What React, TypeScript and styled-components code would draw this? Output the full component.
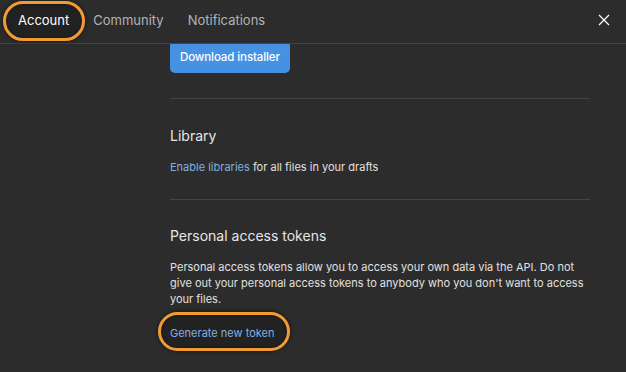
import styled, { createGlobalStyle } from "styled-components";

const GlobalStyle = createGlobalStyle`
  html, body {
    margin: 0;
    padding: 0;
    background: #2c2c2c;
  }
  body {
    font-family: Inter, "Noto Sans", sans-serif;
    -webkit-font-smoothing: antialiased;
  }
`;

const Modal = styled.div`
  width: 626px;
  height: 372px;
  background: #2c2c2c;
  color: #e6e6e6;
  display: flex;
  flex-direction: column;
  overflow: hidden;
`;

const Header = styled.div`
  height: 44px;
  flex: none;
  box-sizing: border-box;
  display: flex;
  align-items: center;
  justify-content: space-between;
  padding: 0 15px 4px 18px;
  border-bottom: 1px solid #444444;
  position: relative;
  z-index: 2;
  background: #2c2c2c;
`;

const Tabs = styled.div`
  display: flex;
  align-items: center;
  gap: 24px;
`;

const Tab = styled.div<{ $active?: boolean }>`
  position: relative;
  font-size: 13px;
  line-height: 16px;
  color: ${(p) => (p.$active ? "#ffffff" : "#b3b3b3")};
`;

const Label = styled.span`
  position: relative;
  z-index: 1;
`;

const Ring = styled.span<{ $inset: string }>`
  position: absolute;
  inset: ${(p) => p.$inset};
  border: 3px solid #f29b32;
  border-radius: 999px;
  background: rgba(0, 0, 0, 0.22);
  box-shadow: 0 0 4px rgba(0, 0, 0, 0.6), inset 0 0 3px rgba(0, 0, 0, 0.5);
  pointer-events: none;
`;

const Close = styled.button`
  border: 0;
  background: none;
  padding: 0;
  width: 14px;
  height: 14px;
  display: flex;
  align-items: center;
  justify-content: center;
  color: #ffffff;
`;

const Body = styled.div`
  flex: 1;
  overflow: hidden;
  padding: 0 36px 0 170px;
`;

const Section = styled.div<{ $first?: boolean }>`
  padding: ${(p) => (p.$first ? "0 0 25px" : "27px 0 24px")};
  margin-top: ${(p) => (p.$first ? "-3px" : "0")};
  border-bottom: 1px solid #444444;

  &:last-child {
    border-bottom: 0;
    padding-top: 26px;
  }
`;

const PrimaryButton = styled.button`
  height: 32px;
  padding: 0 10px;
  border: 0;
  border-radius: 5px;
  background: #4791e3;
  color: #ffffff;
  font-family: inherit;
  font-size: 11.5px;
  font-weight: 500;
  letter-spacing: -0.1px;
`;

const Heading = styled.h2`
  margin: 0 0 13px;
  font-size: 14px;
  line-height: 20px;
  font-weight: 400;
  color: #e6e6e6;
`;

const Text = styled.p`
  margin: 0;
  font-size: 11px;
  line-height: 16px;
  color: #e0e0e0;
`;

const Link = styled.a`
  color: #7eb0e3;
  text-decoration: none;
`;

const ActionLink = styled.a`
  position: relative;
  display: inline-block;
  margin-top: 18px;
  font-size: 11px;
  line-height: 16px;
  color: #7eb0e3;
  text-decoration: none;
`;

export default function App() {
  return (
    <>
      <GlobalStyle />
      <Modal>
        <Header>
          <Tabs>
            <Tab $active>
              <Ring $inset="-11px -16px -13px -15px" />
              <Label>Account</Label>
            </Tab>
            <Tab>Community</Tab>
            <Tab>Notifications</Tab>
          </Tabs>
          <Close aria-label="Close">
            <svg width="12" height="12" viewBox="0 0 12 12">
              <path d="M1 1L11 11M11 1L1 11" stroke="currentColor" strokeWidth="1.2" />
            </svg>
          </Close>
        </Header>
        <Body>
          <Section $first>
            <PrimaryButton>Download installer</PrimaryButton>
          </Section>
          <Section>
            <Heading>Library</Heading>
            <Text>
              <Link>Enable libraries</Link> for all files in your drafts
            </Text>
          </Section>
          <Section>
            <Heading>Personal access tokens</Heading>
            <Text>
              Personal access tokens allow you to access your own data via the API. Do not give
              out your personal access tokens to anybody who you don't want to access your files.
            </Text>
            <ActionLink>
              <Ring $inset="-13px -16px -10px -12px" />
              <Label>Generate new token</Label>
            </ActionLink>
          </Section>
        </Body>
      </Modal>
    </>
  );
}
